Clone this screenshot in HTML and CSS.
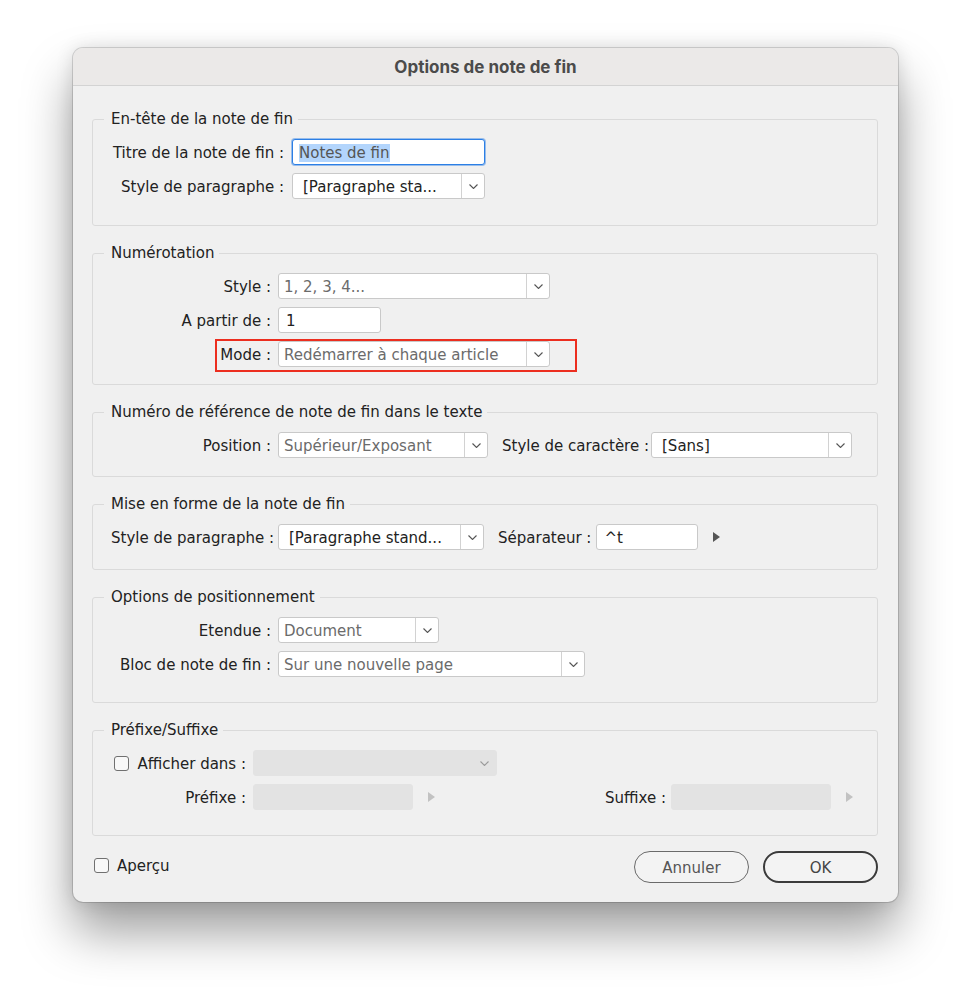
FILE: index.html
```html
<!DOCTYPE html>
<html lang="fr">
<head>
  <meta charset="UTF-8" />
  <title>Options de note de fin</title>
  <link rel="stylesheet" href="styles.css">
</head>
<body>
  <div class="dialog">
    <div class="titlebar">Options de note de fin</div>

    <div class="content">
      <fieldset class="group group-head">
        <legend>En-tête de la note de fin</legend>
        <div class="rows rows-wide">
          <label>Titre de la note de fin :</label>
          <div class="field focus w193"><span class="sel">Notes de fin</span></div>
          <label>Style de paragraphe :</label>
          <div class="select popup w193">
            <span class="value">[Paragraphe sta...</span>
            <span class="arrow"><svg width="9" height="5" viewBox="0 0 9 5"><polyline points="0.5,0.5 4.5,4.5 8.5,0.5" /></svg></span>
          </div>
        </div>
      </fieldset>

      <fieldset class="group group-num">
        <legend>Numérotation</legend>
        <div class="rows">
          <label>Style :</label>
          <div class="select w272">
            <span class="value muted">1, 2, 3, 4...</span>
            <span class="arrow"><svg width="9" height="5" viewBox="0 0 9 5"><polyline points="0.5,0.5 4.5,4.5 8.5,0.5" /></svg></span>
          </div>
          <label>A partir de :</label>
          <div class="field w103">1</div>
          <label>Mode :</label>
          <div class="mode-cell">
            <div class="select w272">
              <span class="value muted">Redémarrer à chaque article</span>
              <span class="arrow"><svg width="9" height="5" viewBox="0 0 9 5"><polyline points="0.5,0.5 4.5,4.5 8.5,0.5" /></svg></span>
            </div>
            <div class="highlight"></div>
          </div>
        </div>
      </fieldset>

      <fieldset class="group group-ref">
        <legend>Numéro de référence de note de fin dans le texte</legend>
        <div class="rows">
          <label>Position :</label>
          <div class="inline">
            <div class="select w210">
              <span class="value muted">Supérieur/Exposant</span>
              <span class="arrow"><svg width="9" height="5" viewBox="0 0 9 5"><polyline points="0.5,0.5 4.5,4.5 8.5,0.5" /></svg></span>
            </div>
            <label class="sub-label tight">Style de caractère :</label>
            <div class="select popup w201">
              <span class="value">[Sans]</span>
              <span class="arrow"><svg width="9" height="5" viewBox="0 0 9 5"><polyline points="0.5,0.5 4.5,4.5 8.5,0.5" /></svg></span>
            </div>
          </div>
        </div>
      </fieldset>

      <fieldset class="group group-format">
        <legend>Mise en forme de la note de fin</legend>
        <div class="rows">
          <label>Style de paragraphe :</label>
          <div class="inline">
            <div class="select popup w206">
              <span class="value">[Paragraphe stand...</span>
              <span class="arrow"><svg width="9" height="5" viewBox="0 0 9 5"><polyline points="0.5,0.5 4.5,4.5 8.5,0.5" /></svg></span>
            </div>
            <label class="sub-label">Séparateur :</label>
            <div class="field w102">^t</div>
            <span class="flyout"></span>
          </div>
        </div>
      </fieldset>

      <fieldset class="group group-pos">
        <legend>Options de positionnement</legend>
        <div class="rows">
          <label>Etendue :</label>
          <div class="select w161">
            <span class="value muted">Document</span>
            <span class="arrow"><svg width="9" height="5" viewBox="0 0 9 5"><polyline points="0.5,0.5 4.5,4.5 8.5,0.5" /></svg></span>
          </div>
          <label>Bloc de note de fin :</label>
          <div class="select w307">
            <span class="value muted">Sur une nouvelle page</span>
            <span class="arrow"><svg width="9" height="5" viewBox="0 0 9 5"><polyline points="0.5,0.5 4.5,4.5 8.5,0.5" /></svg></span>
          </div>
        </div>
      </fieldset>

      <fieldset class="group group-affix">
        <legend>Préfixe/Suffixe</legend>
        <div class="rows rows-narrow">
          <label><span class="check"></span>Afficher dans :</label>
          <div class="select disabled w244">
            <span class="value"></span>
            <span class="arrow"><svg width="9" height="5" viewBox="0 0 9 5"><polyline points="0.5,0.5 4.5,4.5 8.5,0.5" /></svg></span>
          </div>
          <label>Préfixe :</label>
          <div class="inline">
            <div class="field disabled w160"></div>
            <span class="flyout off"></span>
            <label class="sub-label suffix-label">Suffixe :</label>
            <div class="field disabled w160"></div>
            <span class="flyout off"></span>
          </div>
        </div>
      </fieldset>

      <div class="footer">
        <label class="preview"><span class="check"></span>Aperçu</label>
        <div class="buttons">
          <button class="btn">Annuler</button>
          <button class="btn btn-default">OK</button>
        </div>
      </div>
    </div>
  </div>
</body>
</html>
```

FILE: styles.css
```css
* {
  box-sizing: border-box;
}

body {
  margin: 0;
  padding: 48px 0 0 73px;
  min-height: 999px;
  background: #fff;
  font-family: "DejaVu Sans", sans-serif;
  font-size: 15px;
  line-height: 18px;
  color: #222;
}

.dialog {
  width: 825px;
  height: 854px;
  background: #f0f0f0;
  border-radius: 10px;
  overflow: hidden;
  box-shadow: 0 0 0 1px rgba(0, 0, 0, 0.14), 0 0 18px rgba(0, 0, 0, 0.12), 0 30px 50px rgba(0, 0, 0, 0.38);
}

.titlebar {
  height: 38px;
  background: #ebe9e8;
  border-bottom: 1px solid #d3d3d3;
  text-align: center;
  font-family: Inter, "DejaVu Sans", sans-serif;
  font-weight: 700;
  font-size: 17px;
  line-height: 38px;
  color: #4b4b4b;
}

.content {
  padding: 24px 20px 0 19px;
}

/* groups */
.group {
  margin: 0 0 18px;
  min-width: 0;
  border: 1px solid #dadada;
  border-radius: 3px;
  padding: 11px 18px 18px;
}

.group legend {
  padding: 0 5px 0 7px;
  margin-left: -7px;
  line-height: 18px;
}

.group-head { padding-bottom: 26px; }
.group-num { padding-bottom: 17px; }
.group-format { padding-bottom: 19px; }
.group-pos { padding-bottom: 25px; }
.group-affix { padding-bottom: 25px; }

.rows {
  display: grid;
  grid-template-columns: 160px auto;
  justify-content: start;
  align-items: center;
  column-gap: 7px;
  row-gap: 8px;
}

.rows-wide {
  grid-template-columns: 173px auto;
  column-gap: 8px;
}

.rows-narrow {
  grid-template-columns: 135px auto;
}

.rows label {
  text-align: right;
  white-space: nowrap;
  padding-top: 2px;
}

.inline {
  display: flex;
  align-items: center;
}

.inline .sub-label {
  margin: 0 5px 0 14px;
}

.inline .tight {
  margin-right: 2px;
}

.inline .suffix-label {
  margin-left: 170px;
}

/* inputs */
.field,
.select {
  height: 26px;
  background: #fff;
  border: 1px solid #c9c9c9;
  border-radius: 3px;
}

.field {
  padding: 1px 7px 0;
  line-height: 25px;
}

.field.focus {
  border-color: #2c7fe5;
  box-shadow: 0 0 0 1px rgba(44, 127, 229, 0.45);
  color: #555;
  padding-left: 6px;
}

.sel {
  background: #b3d5fc;
}

.select {
  display: flex;
  align-items: stretch;
}

.select .value {
  flex: 1;
  padding: 1px 0 0 5px;
  line-height: 25px;
  white-space: nowrap;
  overflow: hidden;
}

.select.popup .value {
  padding-left: 10px;
}

.value.muted {
  color: #6b6b6b;
}

.select .arrow {
  width: 23px;
  border-left: 1px solid #d2d2d2;
  display: flex;
  align-items: center;
  justify-content: center;
}

.arrow svg polyline {
  fill: none;
  stroke: #555;
  stroke-width: 1.1;
}

.select.disabled,
.field.disabled {
  background: #e3e3e3;
  border-color: #e3e3e3;
}

.select.disabled .arrow {
  border-left: none;
}

.select.disabled .arrow svg polyline {
  stroke: #9a9a9a;
}

.w102 { width: 102px; }
.w103 { width: 103px; }
.w160 { width: 160px; }
.w161 { width: 161px; }
.w193 { width: 193px; }
.w201 { width: 201px; }
.w206 { width: 206px; }
.w210 { width: 210px; }
.w244 { width: 244px; }
.w272 { width: 272px; }
.w307 { width: 307px; }

.flyout {
  width: 0;
  height: 0;
  margin-left: 15px;
  border-top: 5px solid transparent;
  border-bottom: 5px solid transparent;
  border-left: 7px solid #555;
}

.flyout.off {
  border-left-color: #c2c2c2;
}

/* red annotation around the Mode row */
.mode-cell {
  position: relative;
}

.highlight {
  position: absolute;
  left: -63px;
  top: -2px;
  width: 362px;
  height: 33px;
  border: 2px solid #ec2e1f;
  pointer-events: none;
}

/* checkboxes */
.check {
  display: inline-block;
  width: 15px;
  height: 15px;
  border: 1px solid #707070;
  border-radius: 3px;
  background: #f8f8f8;
  vertical-align: -2px;
  margin-right: 8px;
}

/* footer */
.footer {
  display: flex;
  justify-content: space-between;
  align-items: center;
  margin-top: -3px;
}

.preview {
  margin-left: 2px;
  margin-top: -2px;
}

.buttons {
  display: flex;
  gap: 14px;
}

.btn {
  width: 115px;
  height: 32px;
  border-radius: 16px;
  border: 1px solid #6a6a6a;
  background: #f3f3f3;
  font-family: "DejaVu Sans", sans-serif;
  font-size: 15px;
  padding-top: 2px;
  color: #555;
  cursor: pointer;
}

.btn-default {
  border: 2px solid #3b3b3b;
  color: #444;
}
```
